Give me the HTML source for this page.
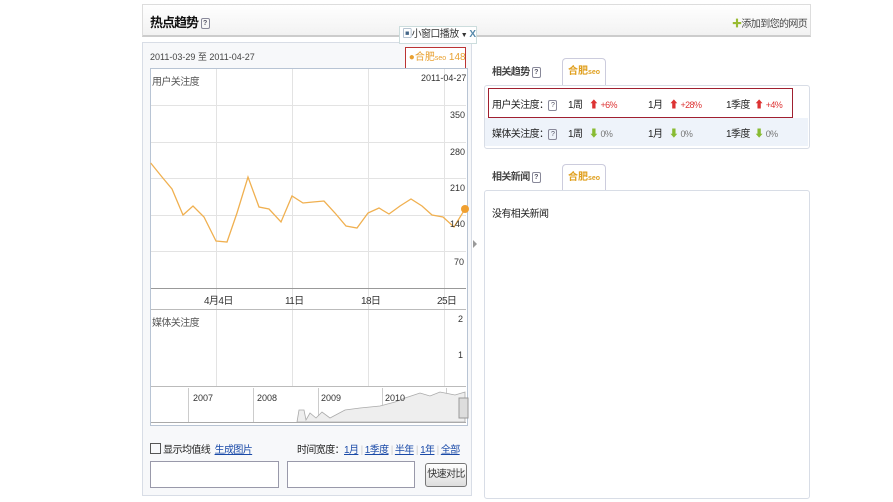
<!DOCTYPE html>
<html><head><meta charset="utf-8"><style>
body{margin:0;width:893px;height:502px;background:#fff;font-family:"Liberation Sans","Noto Sans CJK SC",sans-serif;font-size:10px;color:#333;position:relative;overflow:hidden}
.a{position:absolute;white-space:nowrap}
.c{letter-spacing:-0.6px}
.q{display:inline-block;width:7px;height:9px;border:1px solid #889;border-radius:2px;font-size:7px;line-height:9px;text-align:center;color:#556;vertical-align:middle;letter-spacing:0}
.tab{position:absolute;width:42px;height:26px;border:1px solid #ccd;border-bottom:none;border-radius:4px 4px 0 0;background:#fff;font-size:10px;color:#e0a020;font-weight:bold;text-align:center;line-height:26px}
a{color:#1a4aa8;text-decoration:underline}
</style></head><body>
<div class="a" style="left:142px;top:4px;width:667px;height:30px;border:1px solid #ddd;border-bottom:2px solid #ccc;background:linear-gradient(#fff,#f2f2f2)"></div>
<div class="a" style="left:150px;top:12px;font-size:13px;font-weight:bold;color:#111;letter-spacing:-1px">热点趋势 <span class="q">?</span></div>
<div class="a c" style="left:732px;top:15px;font-size:10px;color:#444"><span style="color:#9b3">✚</span>添加到您的网页</div>
<div class="a" style="left:142px;top:42px;width:328px;height:452px;border:1px solid #d8dde6;background:#f7f8fa"></div>
<div class="a" style="left:150px;top:50px;font-size:9px;color:#444">2011-03-29 至 2011-04-27</div>
<div class="a c" style="left:399px;top:26px;width:76px;height:16px;border:1px solid #cdd;background:#fff;font-size:10px;line-height:16px;color:#333">&nbsp;<span style="color:#468">▣</span>小窗口播放 <span style="font-size:7px">▼</span> <b style="color:#58a">X</b></div>
<div class="a" style="left:405px;top:47px;width:59px;height:20px;border:1px solid #b33;background:#fff;font-size:10px;line-height:20px;color:#e8a030;overflow:hidden">&nbsp;●合肥<span style="font-size:7px">seo</span> 148</div>
<div class="a" style="left:150px;top:68px;width:316px;height:356px;border:1px solid #b8c4d4;background:#fff"></div>
<svg class="a" style="left:0;top:0" width="893" height="502">
<g stroke="#e3e3e3" stroke-width="1">
<line x1="151" y1="105.5" x2="466" y2="105.5"/><line x1="151" y1="142.5" x2="466" y2="142.5"/><line x1="151" y1="178.5" x2="466" y2="178.5"/><line x1="151" y1="215.5" x2="466" y2="215.5"/><line x1="151" y1="251.5" x2="466" y2="251.5"/>
<line x1="216.5" y1="69" x2="216.5" y2="386"/><line x1="292.5" y1="69" x2="292.5" y2="386"/><line x1="368.5" y1="69" x2="368.5" y2="386"/><line x1="444.5" y1="69" x2="444.5" y2="386"/>
</g>
<line x1="151" y1="288.5" x2="466" y2="288.5" stroke="#999"/>
<line x1="151" y1="309.5" x2="466" y2="309.5" stroke="#bbb"/>
<line x1="151" y1="386.5" x2="466" y2="386.5" stroke="#bbb"/>
<rect x="151" y="388" width="314" height="34" fill="#fff"/>
<g stroke="#ccc"><line x1="188.5" y1="388" x2="188.5" y2="422"/><line x1="253.5" y1="388" x2="253.5" y2="422"/><line x1="318.5" y1="388" x2="318.5" y2="422"/><line x1="382.5" y1="388" x2="382.5" y2="422"/><line x1="446.5" y1="388" x2="446.5" y2="422"/></g>
<path d="M297,422 L299,410 L304,410 L306,420 L310,413 L316,418 L322,412 L330,418 L345,410 L360,408 L380,406 L395,402 L405,398 L420,393 L430,396 L440,392 L455,395 L465,392 L465,422 Z" fill="#eee" stroke="#aaa" stroke-width="0.8"/>
<line x1="151" y1="422.5" x2="466" y2="422.5" stroke="#aaa"/>
<rect x="459" y="398" width="9" height="20" fill="#ddd" stroke="#999"/>
<polyline fill="none" stroke="#f0b050" stroke-width="1.3" points="150.7,163 162,177 172,189 183,215 193,206 204,217 216,241 227,242 237,213 248,177 259,207 269,209 281,222 292,196 303,203 313,202 324,201 335,213 346,226 357,228 368,213 379,208 389,214 400,206 411,199 422,206 432,215 443,217 454,227 465,209"/>
<circle cx="465" cy="209" r="4" fill="#f0a030"/>
<path d="M473,240 L477,244 L473,248Z" fill="#999"/>
</svg>
<div class="a c" style="left:152px;top:73px;color:#555">用户关注度</div>
<div class="a" style="left:421px;top:73px;font-size:9px;color:#333">2011-04-27</div>
<div class="a" style="left:450px;top:110px;font-size:9px">350</div>
<div class="a" style="left:450px;top:147px;font-size:9px">280</div>
<div class="a" style="left:450px;top:183px;font-size:9px">210</div>
<div class="a" style="left:450px;top:219px;font-size:9px">140</div>
<div class="a" style="left:454px;top:257px;font-size:9px">70</div>
<div class="a c" style="left:204px;top:292px">4月4日</div>
<div class="a c" style="left:285px;top:292px">11日</div>
<div class="a c" style="left:361px;top:292px">18日</div>
<div class="a c" style="left:437px;top:292px">25日</div>
<div class="a c" style="left:152px;top:314px;color:#555">媒体关注度</div>
<div class="a" style="left:458px;top:314px;font-size:9px">2</div>
<div class="a" style="left:458px;top:350px;font-size:9px">1</div>
<div class="a" style="left:193px;top:393px;font-size:9px">2007</div>
<div class="a" style="left:257px;top:393px;font-size:9px">2008</div>
<div class="a" style="left:321px;top:393px;font-size:9px">2009</div>
<div class="a" style="left:385px;top:393px;font-size:9px">2010</div>
<div class="a c" style="left:150px;top:441px;color:#222"><span style="display:inline-block;width:9px;height:9px;border:1px solid #555;vertical-align:-1px"></span> 显示均值线 &nbsp;<a>生成图片</a></div>
<div class="a c" style="left:297px;top:441px;color:#222">时间宽度：<a>1月</a> <span style="color:#ccc">|</span> <a>1季度</a> <span style="color:#ccc">|</span> <a>半年</a> <span style="color:#ccc">|</span> <a>1年</a> <span style="color:#ccc">|</span> <a>全部</a></div>
<div class="a" style="left:150px;top:461px;width:127px;height:25px;border:1px solid #99a;background:#fff"></div>
<div class="a" style="left:287px;top:461px;width:126px;height:25px;border:1px solid #99a;background:#fff"></div>
<div class="a c" style="left:425px;top:463px;width:40px;height:22px;border:1px solid #777;border-radius:3px;background:linear-gradient(#fff,#ddd);font-size:10px;line-height:22px;text-align:center">快速对比</div>
<div class="a c" style="left:492px;top:63px;font-weight:bold;color:#444">相关趋势 <span class="q">?</span></div>
<div class="tab" style="left:562px;top:58px">合肥<span style="font-size:7px">seo</span></div>
<div class="a" style="left:484px;top:85px;width:324px;height:62px;border:1px solid #d8dde6;border-radius:3px;background:#fff"></div>
<div class="a" style="left:485px;top:118px;width:323px;height:28px;background:#eef3fa"></div>
<div class="a" style="left:488px;top:88px;width:303px;height:28px;border:1px solid #a02030"></div>
<div class="a c" style="left:492px;top:96px;color:#222">用户关注度：<span class="q">?</span></div>
<div class="a c" style="left:568px;top:96px;color:#222">1周 &nbsp;&nbsp;<span style="color:#d33">⬆</span> <span style="color:#d33;font-size:9px">+6%</span></div>
<div class="a c" style="left:648px;top:96px;color:#222">1月 &nbsp;&nbsp;<span style="color:#d33">⬆</span> <span style="color:#d33;font-size:9px">+28%</span></div>
<div class="a c" style="left:726px;top:96px;color:#222">1季度 &nbsp;<span style="color:#d33">⬆</span> <span style="color:#d33;font-size:9px">+4%</span></div>
<div class="a c" style="left:492px;top:125px;color:#222">媒体关注度：<span class="q">?</span></div>
<div class="a c" style="left:568px;top:125px;color:#222">1周 &nbsp;&nbsp;<span style="color:#8b3">⬇</span> <span style="color:#777;font-size:9px">0%</span></div>
<div class="a c" style="left:648px;top:125px;color:#222">1月 &nbsp;&nbsp;<span style="color:#8b3">⬇</span> <span style="color:#777;font-size:9px">0%</span></div>
<div class="a c" style="left:726px;top:125px;color:#222">1季度 &nbsp;<span style="color:#8b3">⬇</span> <span style="color:#777;font-size:9px">0%</span></div>
<div class="a c" style="left:492px;top:168px;font-weight:bold;color:#444">相关新闻 <span class="q">?</span></div>
<div class="tab" style="left:562px;top:164px">合肥<span style="font-size:7px">seo</span></div>
<div class="a" style="left:484px;top:190px;width:324px;height:307px;border:1px solid #d8dde6;border-radius:3px;background:#fff"></div>
<div class="a c" style="left:492px;top:205px;color:#222">没有相关新闻</div>
</body></html>
